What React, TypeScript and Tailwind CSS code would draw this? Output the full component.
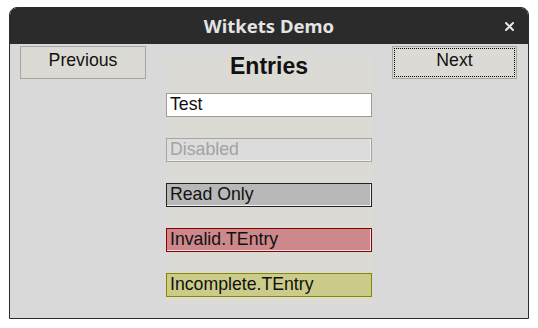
import React from "react";

const entryBase =
  "h-[24px] w-full border px-[3px] text-[17.7px] leading-[20px] whitespace-nowrap overflow-hidden";

export default function App() {
  return (
    <div
      className="w-[538px] h-[328px] bg-white pt-[7px] pl-[9px]"
      style={{ fontFamily: '"Liberation Sans", Arial, sans-serif' }}
    >
      <div className="w-[520px] h-[312px] flex flex-col rounded-t-[8px] overflow-hidden border border-[#2b2b2b] bg-[#d9d9d9]">
        {/* title bar */}
        <div className="relative h-[36px] shrink-0 bg-[#2b2b2b] flex items-center justify-center">
          <span
            className="text-[#e4e4e4] text-[18.5px] font-bold leading-none"
            style={{ fontFamily: '"Noto Sans", "Open Sans", sans-serif' }}
          >
            Witkets Demo
          </span>
          <svg
            className="absolute right-[14px] top-[14px]"
            width="9"
            height="9"
            viewBox="0 0 9 9"
          >
            <path d="M1 1 L8 8 M8 1 L1 8" stroke="#e8e8e8" strokeWidth="2" strokeLinecap="round" />
          </svg>
        </div>
        {/* content */}
        <div className="flex items-start pl-[10px] text-black">
          <button className="mt-[2px] w-[126px] h-[33px] bg-[#dcdad5] border border-[#a8a59e] text-[17.7px] leading-[26px] pb-[5px] text-[#111]">
            Previous
          </button>
          <div className="ml-[20px] mt-[11px] w-[206px] h-[252px] bg-[#dcdad5] flex flex-col">
            <div className="text-center text-[23px] font-bold leading-[23px] text-[#111]">Entries</div>
            <div className="mt-[15px] flex flex-col gap-[21px]">
              <div className={`${entryBase} bg-white border-[#a09c94] text-[#111]`}>Test</div>
              <div className={`${entryBase} bg-[#dcdcdc] border-[#a8a59e] text-[#a3a3a3] shadow-[inset_-1px_-1px_0_#eeeeee]`}>
                Disabled
              </div>
              <div className={`${entryBase} bg-[#b8b8b8] border-[#222] text-[#111] shadow-[inset_-1px_-1px_0_#f0f0f0]`}>
                Read Only
              </div>
              <div className={`${entryBase} bg-[#cc888a] border-[#8e0000] text-[#111] shadow-[inset_-1px_-1px_0_#f4e0e0]`}>
                Invalid.TEntry
              </div>
              <div className={`${entryBase} bg-[#cccc8a] border-[#888800] text-[#111]`}>
                Incomplete.TEntry
              </div>
            </div>
          </div>
          <button className="ml-[20px] mt-[2px] w-[125px] h-[33px] bg-[#dcdad5] border border-[#a8a59e] p-[1px]">
            <div className="w-full h-full border border-dotted border-black text-[17.7px] leading-[22px] pb-[6px] text-[#111]">
              Next
            </div>
          </button>
        </div>
      </div>
    </div>
  );
}
